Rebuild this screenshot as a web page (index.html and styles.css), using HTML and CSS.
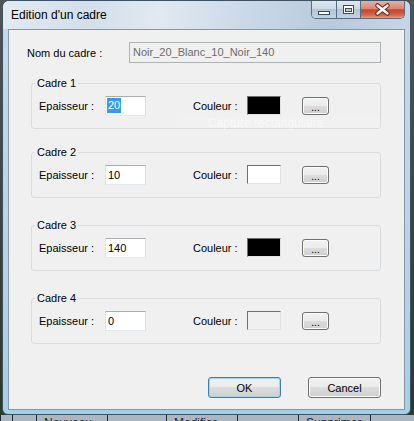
FILE: index.html
```html
<!DOCTYPE html>
<html lang="fr">
<head>
  <meta charset="UTF-8">
  <title>Edition d'un cadre</title>
  <meta name="viewport" content="width=device-width, initial-scale=1.0">
  <link rel="stylesheet" href="styles.css">
</head>
<body>

  <div class="window">
    <div class="titlebar">
      <span class="title">Edition d'un cadre</span>
      <div class="caption">
        <div class="cbtn cbtn-min">
          <svg width="24" height="17" viewBox="0 0 24 17"><rect x="6.5" y="10.5" width="11" height="3" fill="#fff" stroke="#3b4b5b"/></svg>
        </div>
        <div class="cbtn cbtn-max">
          <svg width="23" height="17" viewBox="0 0 23 17"><rect x="6.5" y="4.5" width="10" height="8" fill="#fff" stroke="#3b4b5b"/><rect x="8.5" y="7.5" width="6" height="3" fill="#b9c9d9" stroke="#3b4b5b"/></svg>
        </div>
        <div class="cbtn cbtn-close">
          <svg width="43" height="17" viewBox="0 0 43 17"><path d="M16.5 4.5 L26.5 12.5 M26.5 4.5 L16.5 12.5" stroke="#6a2618" stroke-width="4.5" stroke-linecap="round"/><path d="M16.5 4.5 L26.5 12.5 M26.5 4.5 L16.5 12.5" stroke="#fff" stroke-width="2.4" stroke-linecap="round"/></svg>
        </div>
      </div>
    </div>

    <div class="client">
      <div class="name-row">
        <span class="name-label">Nom du cadre :</span>
        <div class="textbox wide disabled">Noir_20_Blanc_10_Noir_140</div>
      </div>

      <fieldset class="group">
        <legend>Cadre 1</legend>
        <div class="row">
          <span class="lbl-ep">Epaisseur :</span>
          <div class="textbox small"><span class="sel">20</span></div>
          <span class="lbl-col">Couleur :</span>
          <div class="swatch black"></div>
          <button class="btn pick">...</button>
        </div>
      </fieldset>

      <fieldset class="group group-2">
        <legend>Cadre 2</legend>
        <div class="row">
          <span class="lbl-ep">Epaisseur :</span>
          <div class="textbox small">10</div>
          <span class="lbl-col">Couleur :</span>
          <div class="swatch white"></div>
          <button class="btn pick">...</button>
        </div>
      </fieldset>

      <fieldset class="group">
        <legend>Cadre 3</legend>
        <div class="row">
          <span class="lbl-ep">Epaisseur :</span>
          <div class="textbox small">140</div>
          <span class="lbl-col">Couleur :</span>
          <div class="swatch black"></div>
          <button class="btn pick">...</button>
        </div>
      </fieldset>

      <fieldset class="group">
        <legend>Cadre 4</legend>
        <div class="row">
          <span class="lbl-ep">Epaisseur :</span>
          <div class="textbox small">0</div>
          <span class="lbl-col">Couleur :</span>
          <div class="swatch"></div>
          <button class="btn pick">...</button>
        </div>
      </fieldset>

      <div class="actions">
        <button class="btn default">OK</button>
        <button class="btn">Cancel</button>
      </div>

      <!-- reste d'une infobulle qui s'efface -->
      <div class="ghost-box"></div>
      <span class="ghost">Capture rectangulaire</span>
    </div>
  </div>

  <div class="behind">
    <div class="cell" style="width:12px"></div>
    <div class="cell" style="width:24px"></div>
    <div class="cell" style="width:71px">Nouveau</div>
    <div class="cell" style="width:59px"></div>
    <div class="cell" style="width:71px">Modifier</div>
    <div class="cell" style="width:61px"></div>
    <div class="cell" style="width:72px">Supprimer</div>
    <div class="cell" style="width:44px"></div>
  </div>

</body>
</html>
```

FILE: styles.css
```css
* { box-sizing: border-box; }
body {
  margin: 0;
  width: 414px;
  height: 421px;
  overflow: hidden;
  background: linear-gradient(#525454, #3a4238 60%, #2c3826);
  font-family: "Liberation Sans", Arial, sans-serif;
  font-size: 11px;
  color: #000;
}

/* fenetre */
.window {
  margin-left: 2px;
  width: 409px;
  height: 415px;
  border: 1px solid #3e5163;
  border-radius: 7px 7px 6px 6px;
  background: linear-gradient(180deg, #c9d8e6 0%, #bcd2e4 60%, #a4d0e6 100%);
  display: flex;
  flex-direction: column;
  overflow: hidden;
}
.titlebar {
  flex: none;
  height: 28px;
  display: flex;
  justify-content: space-between;
  align-items: flex-start;
  padding: 0 5px 0 8px;
  background: linear-gradient(100deg, #e2eaf2 0%, #d3dfeb 22%, #e0e9f1 38%, #c8d7e6 62%, #b8cadb 80%, #c6d6e5 100%);
}
.title {
  font-size: 12px;
  line-height: 16px;
  padding-top: 6px;
}
.caption {
  display: flex;
  height: 18px;
  border: 1px solid #5a6d80;
  border-top: none;
  border-radius: 0 0 5px 5px;
  overflow: hidden;
}
.cbtn { display: flex; }
.cbtn + .cbtn { border-left: 1px solid #5a6d80; }
.cbtn-min, .cbtn-max {
  background: linear-gradient(#e0e8f0 0%, #cbd8e5 45%, #b2c4d6 50%, #c2d3e3 100%);
}
.cbtn-close {
  background: linear-gradient(#eab0a2 0%, #da8672 45%, #c4452c 52%, #cf6349 80%, #e29c80 100%);
}

/* zone cliente */
.client {
  flex: none;
  height: 381px;
  margin: 0 5px;
  border: 1px solid #8397aa;
  background: #f0f0f0;
  padding: 12px 23px 0 18px;
  position: relative;
}
.name-row {
  display: flex;
  align-items: center;
  height: 21px;
}
.name-label { flex: 1; }

.textbox {
  background: #fff;
  border: 1px solid;
  border-color: #abadb3 #dbdfe6 #e3e9ef #e2e3ea;
  padding-left: 2px;
  line-height: 18px;
  white-space: nowrap;
}
.textbox.wide { width: 252px; height: 21px; line-height: 19px; }
.textbox.disabled {
  background: #f0f0f0;
  border-color: #adb2b5;
  color: #6d6d6d;
  padding-left: 3px;
}
.textbox.small { width: 41px; height: 20px; }
.sel {
  display: inline-block;
  background: #3399ff;
  color: #fff;
  line-height: 15px;
  padding: 0 1px;
  margin-left: -1px;
  vertical-align: 1px;
}

.group {
  margin: 13px 0 0 4px;
  width: 350px;
  border: 1px solid #d9dcdf;
  border-radius: 3px;
  padding: 6px 7px 12px;
}
.group + .group { margin-top: 20px; }
.group.group-2 { margin-top: 16px; }
legend {
  padding: 0 2px;
  margin-left: -4px;
  line-height: 14px;
}
.row {
  display: flex;
  align-items: center;
  height: 20px;
}
.lbl-ep { width: 66px; }
.lbl-col { margin-left: 47px; width: 54px; }
.swatch {
  width: 34px;
  height: 19px;
  align-self: flex-start;
  border: 1px solid;
  border-color: #6f6f6f #e3e3e3 #e3e3e3 #6f6f6f;
}
.swatch.black { background: #000; }
.swatch.white { background: #fff; }

.btn {
  font: inherit;
  color: #000;
  width: 73px;
  height: 21px;
  padding: 0;
  border: 1px solid #707070;
  border-radius: 3px;
  background: linear-gradient(#f2f2f2 0%, #ebebeb 49%, #dddddd 50%, #cfcfcf 100%);
  box-shadow: inset 0 0 0 1px #fcfcfc;
}
.btn.default {
  border-color: #3c7fb1;
  box-shadow: inset 0 0 0 1px #9fd6f4;
}
.btn.pick {
  margin-left: 21px;
  width: 27px;
  height: 18px;
  line-height: 20px;
  font-size: 10px;
}
.actions {
  display: flex;
  justify-content: flex-end;
  gap: 27px;
  margin-top: 33px;
}

.ghost-box {
  position: absolute;
  left: 168px;
  top: 88px;
  width: 204px;
  height: 10px;
  background: rgba(255, 255, 255, 0.12);
}
.ghost {
  position: absolute;
  left: 199px;
  top: 86px;
  font-size: 12px;
  line-height: 14px;
  color: rgba(255, 255, 255, 0.55);
}

/* fenetre derriere */
.behind {
  display: flex;
  height: 6px;
  overflow: hidden;
  background: #aab6c1;
}
.cell {
  flex: none;
  border-left: 1px solid #1e2a36;
  padding: 1px 0 0 7px;
  font-size: 12px;
  line-height: 14px;
  color: #1b2633;
}
```
